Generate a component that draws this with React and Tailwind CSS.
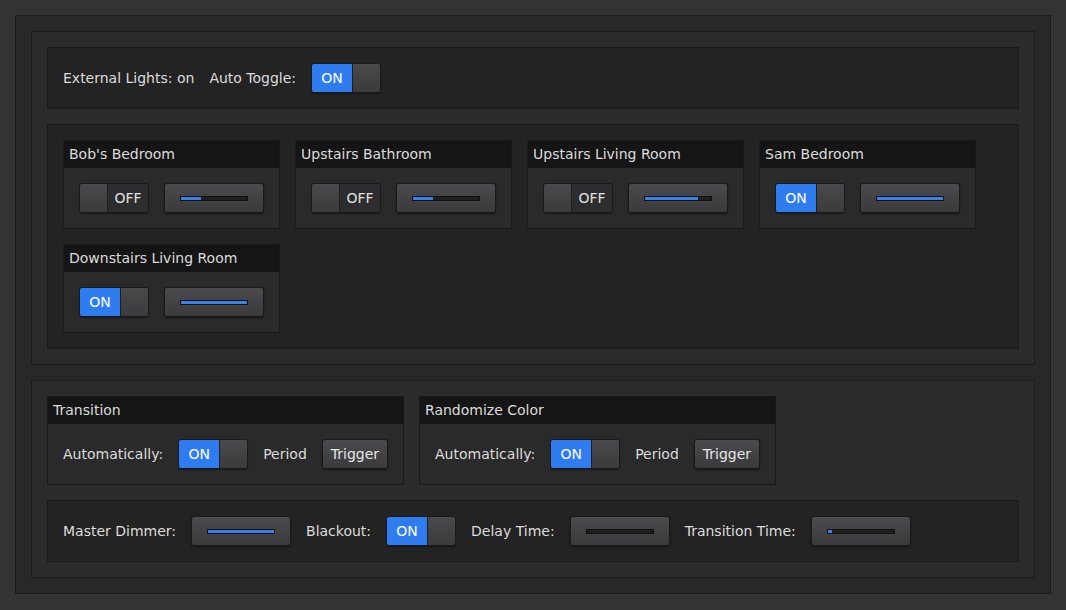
const font = { fontFamily: '"DejaVu Sans", Verdana, sans-serif' };

const Toggle = ({ on }) => (
  <div className="flex h-[30px] w-[70px] shrink-0 overflow-hidden rounded-[3px] border border-[#1a1a1a] shadow-[0_1px_1px_rgba(0,0,0,0.4)]">
    {on ? (
      <>
        <div className="flex w-[40px] items-center justify-center bg-[#2f7cf0] text-[14px] text-white">ON</div>
        <div className="flex-1 border-l border-[#1e1e1e] bg-gradient-to-b from-[#4a4a4d] to-[#3b3b3e]" />
      </>
    ) : (
      <>
        <div className="w-[28px] border-r border-[#1e1e1e] bg-gradient-to-b from-[#4a4a4d] to-[#3b3b3e]" />
        <div className="flex flex-1 items-center justify-center bg-[#2d2d2f] text-[14px] text-[#e0e0e0]">OFF</div>
      </>
    )}
  </div>
);

const Slider = ({ value }) => (
  <div className="flex h-[30px] w-[100px] shrink-0 items-center justify-center rounded-[3px] border border-[#1a1a1a] bg-gradient-to-b from-[#4b4b4e] to-[#3a3a3d] shadow-[0_1px_2px_rgba(0,0,0,0.5)]">
    <div className="h-[5px] w-[68px] border border-[#111] bg-[#202020]">
      <div className="h-full bg-[#3a80ea]" style={{ width: `${value}%` }} />
    </div>
  </div>
);

const Button = ({ children }) => (
  <div className="flex h-[30px] shrink-0 items-center rounded-[3px] border border-[#1a1a1a] bg-gradient-to-b from-[#4b4b4e] to-[#3a3a3d] px-[8px] text-[14px] text-[#e6e6e6] shadow-[0_1px_2px_rgba(0,0,0,0.5)]">
    {children}
  </div>
);

const Label = ({ children }) => <span className="shrink-0 whitespace-nowrap text-[14px] text-[#dcdcdc]">{children}</span>;

const Card = ({ title, children, className = "" }) => (
  <div className={`flex flex-col border border-[#1a1a1a] bg-[#2a2a2a] ${className}`}>
    <div className="flex h-[27px] items-center bg-[#151515] px-[5px] text-[14px] text-[#dcdcdc]">{title}</div>
    <div className="flex items-center gap-[15px] p-[15px]">{children}</div>
  </div>
);

const rooms = [
  { name: "Bob's Bedroom", on: false, level: 30 },
  { name: "Upstairs Bathroom", on: false, level: 30 },
  { name: "Upstairs Living Room", on: false, level: 80 },
  { name: "Sam Bedroom", on: true, level: 100 },
  { name: "Downstairs Living Room", on: true, level: 100 },
];

export default function App() {
  return (
    <div className="h-[610px] w-[1066px] bg-[#333333] p-[15px]" style={font}>
      <div className="flex h-[579px] flex-col gap-[15px] border border-[#1b1b1b] bg-[#282828] p-[15px]">
        <div className="flex flex-col gap-[15px] border border-[#1b1b1b] bg-[#2b2b2b] p-[15px]">
          <div className="flex items-center gap-[15px] border border-[#1a1a1a] bg-[#232323] p-[15px]">
            <Label>External Lights: on</Label>
            <Label>Auto Toggle:</Label>
            <Toggle on />
          </div>
          <div className="flex flex-wrap gap-[15px] border border-[#1a1a1a] bg-[#232323] p-[15px]">
            {rooms.map((r) => (
              <Card key={r.name} title={r.name} className="w-[217px]">
                <Toggle on={r.on} />
                <Slider value={r.level} />
              </Card>
            ))}
          </div>
        </div>
        <div className="flex flex-col gap-[15px] border border-[#1b1b1b] bg-[#2b2b2b] p-[15px]">
          <div className="flex gap-[15px]">
            {["Transition", "Randomize Color"].map((t) => (
              <Card key={t} title={t} className="w-[357px]">
                <Label>Automatically:</Label>
                <Toggle on />
                <Label>Period</Label>
                <Button>Trigger</Button>
              </Card>
            ))}
          </div>
          <div className="flex items-center gap-[15px] border border-[#1a1a1a] bg-[#232323] p-[15px]">
            <Label>Master Dimmer:</Label>
            <Slider value={100} />
            <Label>Blackout:</Label>
            <Toggle on />
            <Label>Delay Time:</Label>
            <Slider value={0} />
            <Label>Transition Time:</Label>
            <Slider value={7} />
          </div>
        </div>
      </div>
    </div>
  );
}
